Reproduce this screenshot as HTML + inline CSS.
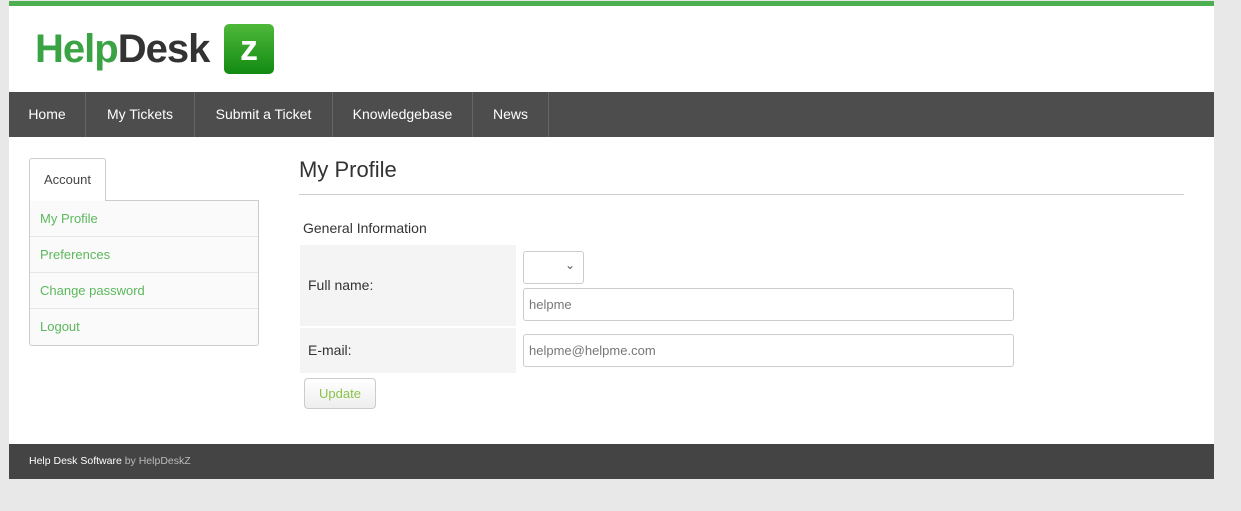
<!DOCTYPE html>
<html><head><meta charset="utf-8"><style>
*{box-sizing:border-box;margin:0;padding:0}
body{width:1241px;height:511px;background:#e8e8e8;font-family:"Liberation Sans",sans-serif;position:relative;overflow:hidden}
.wrap{position:absolute;left:9px;top:1px;width:1205px;height:478px;background:#fff}
.top{height:5px;background:#4caf50}
.logo{position:absolute;left:26px;top:21px;height:54px;width:250px}
.logo .t{position:absolute;left:0;top:5px;font-size:40px;font-weight:bold;letter-spacing:-1px;white-space:nowrap}
.z{position:absolute;left:189px;top:2px;width:50px;height:50px;border-radius:5px;background:linear-gradient(#4fb83a,#128a12);color:#fff;font-size:36px;font-weight:bold;text-align:center;line-height:48px}
.nav{position:absolute;top:91px;left:0;width:1205px;height:45px;background:#4d4d4d;display:flex}
.nav div{color:#fff;font-size:14px;line-height:45px;text-align:center;border-right:1px solid #666}
.side{position:absolute;left:20px;top:157px;width:230px}
.tab{width:77px;height:43px;border:1px solid #ccc;border-bottom:none;border-radius:3px 3px 0 0;font-size:13px;color:#444;line-height:42px;text-align:center;background:#fff;position:relative;z-index:1}
.list{border:1px solid #ccc;border-radius:0 0 3px 3px;background:#fafafa;margin-top:-1px}
.list div{height:36px;line-height:35px;padding-left:10px;font-size:13px;color:#5cb85c;border-bottom:1px solid #e6e6e6}
.list div:last-child{border:none}
h1{position:absolute;left:290px;top:156px;font-size:22px;font-weight:normal;color:#333}
.hr{position:absolute;left:290px;top:193px;width:885px;height:1px;background:#ccc}
.gi{position:absolute;left:294px;top:219px;font-size:14px;color:#333}
.lab{position:absolute;left:291px;background:#f4f4f4;width:216px;font-size:14px;color:#333;padding-left:8px}
input,.sel{position:absolute;border:1px solid #ccc;border-radius:3px;background:#fff;font-size:13px;color:#777;padding-left:5px;font-family:"Liberation Sans",sans-serif}
.btn{position:absolute;left:295px;top:377px;width:72px;height:31px;border:1px solid #ccc;border-radius:4px;background:linear-gradient(#fff,#eee);color:#8bc34a;font-size:13px;text-align:center;line-height:29px}
.foot{position:absolute;left:0;top:443px;width:1205px;height:35px;background:#444;font-size:10.5px;color:#fff;line-height:35px;padding-left:20px}
</style></head><body>
<div class="wrap">
<div class="top"></div>
<div class="logo"><span class="t"><span style="color:#3aa445">Help</span><span style="color:#333">Desk</span></span><div class="z">z</div></div>
<div class="nav"><div style="width:77px">Home</div><div style="width:109px">My Tickets</div><div style="width:138px">Submit a Ticket</div><div style="width:140px">Knowledgebase</div><div style="width:76px">News</div></div>
<div class="side"><div class="tab">Account</div><div class="list"><div>My Profile</div><div>Preferences</div><div>Change password</div><div>Logout</div></div></div>
<h1>My Profile</h1><div class="hr"></div>
<div class="gi">General Information</div>
<div class="lab" style="top:244px;height:81px;line-height:81px">Full name:</div>
<div class="lab" style="top:327px;height:45px;line-height:45px">E-mail:</div>
<div class="sel" style="left:514px;top:250px;width:61px;height:33px"><span style="position:absolute;right:8px;top:6px;font-size:12px;color:#555">&#8964;</span></div>
<input style="left:514px;top:287px;width:491px;height:33px" value="helpme">
<input style="left:514px;top:333px;width:491px;height:33px" value="helpme@helpme.com">
<div class="btn">Update</div>
<div class="foot">Help Desk Software <span style="color:#bbb">by HelpDeskZ</span></div>
</div>
</body></html>
